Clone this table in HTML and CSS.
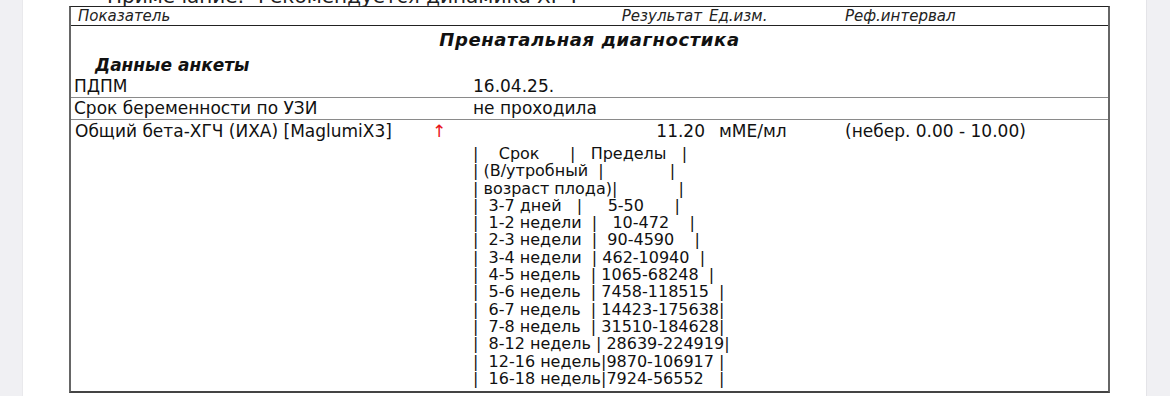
FILE: index.html
```html
<!DOCTYPE html>
<html lang="ru">
<head>
<meta charset="utf-8">
<title>Пренатальная диагностика</title>
<link rel="stylesheet" href="styles.css">
</head>
<body>
<div class="page">
  <div class="note">
    <span class="note-label">Примечание:</span>
    <span class="note-text">Рекомендуется динамика ХГЧ</span>
  </div>
  <div class="report">
    <div class="row head">
      <div class="c-name">Показатель</div>
      <div class="c-flag"></div>
      <div class="c-res">Результат</div>
      <div class="c-unit">Ед.изм.</div>
      <div class="c-ref">Реф.интервал</div>
    </div>
    <div class="section-title">Пренатальная диагностика</div>
    <div class="group-title">Данные анкеты</div>
    <div class="row item first ruled">
      <div class="c-name">ПДПМ</div>
      <div class="c-flag"></div>
      <div class="c-text">16.04.25.</div>
    </div>
    <div class="row item second ruled">
      <div class="c-name">Срок беременности по УЗИ</div>
      <div class="c-flag"></div>
      <div class="c-text">не проходила</div>
    </div>
    <div class="row item last">
      <div class="c-name indent">Общий бета-ХГЧ (ИХА) [MaglumiX3]</div>
      <div class="c-flag up">↑</div>
      <div class="c-res num">11.20</div>
      <div class="c-unit val">мМЕ/мл</div>
      <div class="c-ref">(небер. 0.00 - 10.00)</div>
      <pre class="comment">|    Срок      |   Пределы   |
| (В/утробный  |             |
| возраст плода)|            |
|  3-7 дней   |     5-50      |
|  1-2 недели  |   10-472    |
|  2-3 недели  |  90-4590    |
|  3-4 недели  | 462-10940  |
|  4-5 недель  | 1065-68248  |
|  5-6 недель  | 7458-118515  |
|  6-7 недель  | 14423-175638|
|  7-8 недель  | 31510-184628|
|  8-12 недель | 28639-224919|
|  12-16 недель|9870-106917 |
|  16-18 недель|7924-56552   |</pre>
    </div>
  </div>
</div>
</body>
</html>
```
FILE: styles.css
```css
html, body {
  margin: 0;
  padding: 0;
}
body {
  background: #f0f0f3;
  font-family: "DejaVu Sans", "Noto Sans", sans-serif;
  color: #111;
  overflow: hidden;
}
.page {
  margin-left: 23px;
  width: 1123px;
  height: 396px;
  background: #fff;
  overflow: hidden;
  box-shadow: 1px 0 0 #e4e4e8, -1px 0 0 #e9e9ec;
}
.note {
  display: flex;
  margin-top: -15px;
  height: 21px;
  line-height: 22px;
  font-size: 20px;
  color: #222;
  white-space: nowrap;
}
.note-label {
  margin-left: 84px;
  width: 151px;
}
.report {
  margin-left: 46px;
  width: 1041px;
  box-sizing: border-box;
  border-top: 1px solid #222;
  border-left: 2px solid #666;
  border-right: 2px solid #666;
  border-bottom: 2px solid #444;
}
.row {
  display: grid;
  grid-template-columns: 361px 41px 234px 138px 1fr;
  white-space: nowrap;
}
.head {
  height: 18px;
  line-height: 18px;
  font-size: 15px;
  font-style: italic;
  color: #222;
  border-bottom: 1px solid #222;
}
.head .c-name {
  padding-left: 7px;
}
.head .c-res {
  text-align: right;
  padding-right: 5px;
}
.head .c-unit {
  padding-left: 2px;
}
.section-title {
  padding-top: 4px;
  line-height: 20px;
  font-size: 18px;
  letter-spacing: 0.6px;
  font-weight: bold;
  font-style: italic;
  text-align: center;
}
.group-title {
  padding-top: 5px;
  padding-left: 24px;
  line-height: 20px;
  font-size: 17px;
  font-weight: bold;
  font-style: italic;
}
.item {
  font-size: 17px;
  line-height: 20px;
}
.item.first {
  padding-top: 1px;
  padding-bottom: 1px;
}
.item.second {
  line-height: 21px;
}
.item.ruled {
  border-bottom: 1px solid #8a8a8a;
}
.item.last {
  padding-top: 1px;
}
.c-name {
  padding-left: 3px;
}
.c-name.indent {
  padding-left: 4px;
}
.c-text {
  grid-column: 3 / -1;
}
.up {
  color: #e8141b;
  padding-left: 0;
}
.num {
  text-align: right;
  padding-right: 2px;
}
.val {
  padding-left: 12px;
}
.comment {
  grid-column: 3 / -1;
  margin: 4px 0 0 0;
  padding-bottom: 4px;
  font-family: "DejaVu Sans", sans-serif;
  font-size: 16px;
  line-height: 17.3px;
  white-space: pre;
  color: #111;
}
```
